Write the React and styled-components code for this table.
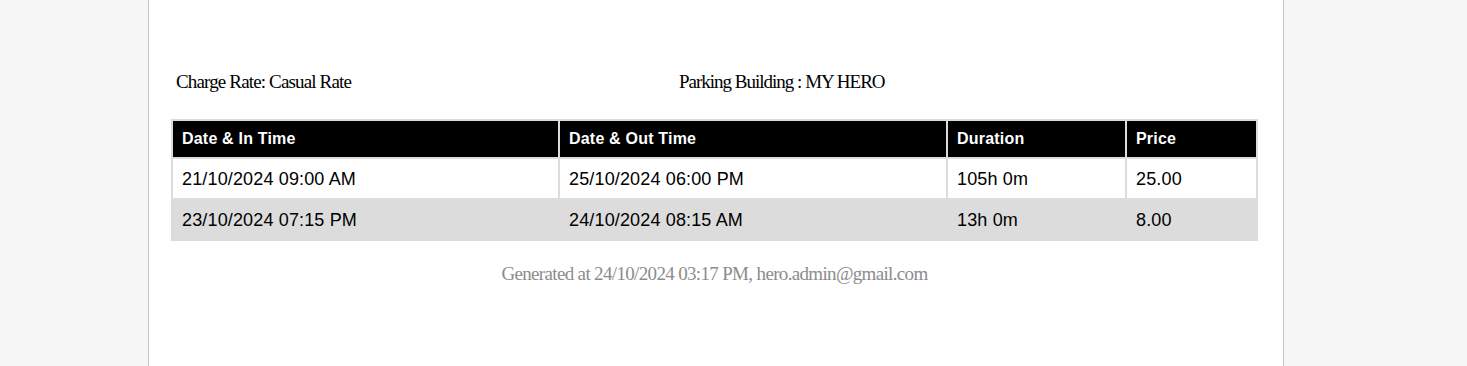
import React from "react";
import styled, { createGlobalStyle } from "styled-components";

const GlobalStyle = createGlobalStyle`
  html, body {
    margin: 0;
    padding: 0;
    background: #f7f7f7;
  }
`;

const Page = styled.div`
  min-height: 366px;
  display: flex;
  padding-left: 148px;
`;

const Sheet = styled.div`
  width: 1136px;
  min-height: 366px;
  background: #fff;
  border-left: 1px solid #c6c6c6;
  border-right: 1px solid #c6c6c6;
  padding: 70px 24px 0 22px;
  box-sizing: border-box;
`;

const InfoRow = styled.div`
  display: grid;
  grid-template-columns: 503px 1fr;
  padding-left: 5px;
  margin-bottom: 25px;
`;

const SerifText = styled.div`
  font-family: "Liberation Serif", "Times New Roman", serif;
  font-size: 19px;
  letter-spacing: ${(props) => props.spacing || "-0.85px"};
  line-height: 24px;
  color: ${(props) => props.color || "#000"};
  text-align: ${(props) => props.align || "left"};
`;

const Table = styled.table`
  width: 1087px;
  table-layout: fixed;
  border-collapse: separate;
  border-spacing: 2px;
  background: #dcdcdc;
  font-family: "Liberation Sans", Arial, sans-serif;
`;

const HeadCell = styled.th`
  box-sizing: border-box;
  background: #000;
  color: #fff;
  font-size: 16px;
  font-weight: 700;
  letter-spacing: 0.2px;
  text-align: left;
  padding: 8px 9px;
  line-height: 20px;
  width: ${(props) => props.width}px;
`;

const Cell = styled.td`
  background: ${(props) => (props.shaded ? "#dcdcdc" : "#fff")};
  color: #000;
  font-size: 18px;
  letter-spacing: 0.15px;
  line-height: 22px;
  padding: 9px 9px 8px;
`;

const Footer = styled(SerifText)`
  width: 1087px;
  margin-top: 21px;
`;

const columns = [
  { label: "Date & In Time", width: 385 },
  { label: "Date & Out Time", width: 386 },
  { label: "Duration", width: 177 },
  { label: "Price", width: 129 },
];

const rows = [
  ["21/10/2024 09:00 AM", "25/10/2024 06:00 PM", "105h 0m", "25.00"],
  ["23/10/2024 07:15 PM", "24/10/2024 08:15 AM", "13h 0m", "8.00"],
];

const App = () => {
  return (
    <Page>
      <GlobalStyle />
      <Sheet>
        <InfoRow>
          <SerifText>Charge Rate: Casual Rate</SerifText>
          <SerifText spacing="-1px">Parking Building : MY HERO</SerifText>
        </InfoRow>
        <Table>
          <thead>
            <tr>
              {columns.map((col) => (
                <HeadCell key={col.label} width={col.width}>
                  {col.label}
                </HeadCell>
              ))}
            </tr>
          </thead>
          <tbody>
            {rows.map((row, i) => (
              <tr key={i}>
                {row.map((value, j) => (
                  <Cell key={j} shaded={i % 2 === 1}>
                    {value}
                  </Cell>
                ))}
              </tr>
            ))}
          </tbody>
        </Table>
        <Footer color="#8c8c8c" align="center" spacing="-0.66px">
          Generated at 24/10/2024 03:17 PM, hero.admin@gmail.com
        </Footer>
      </Sheet>
    </Page>
  );
};

export default App;
